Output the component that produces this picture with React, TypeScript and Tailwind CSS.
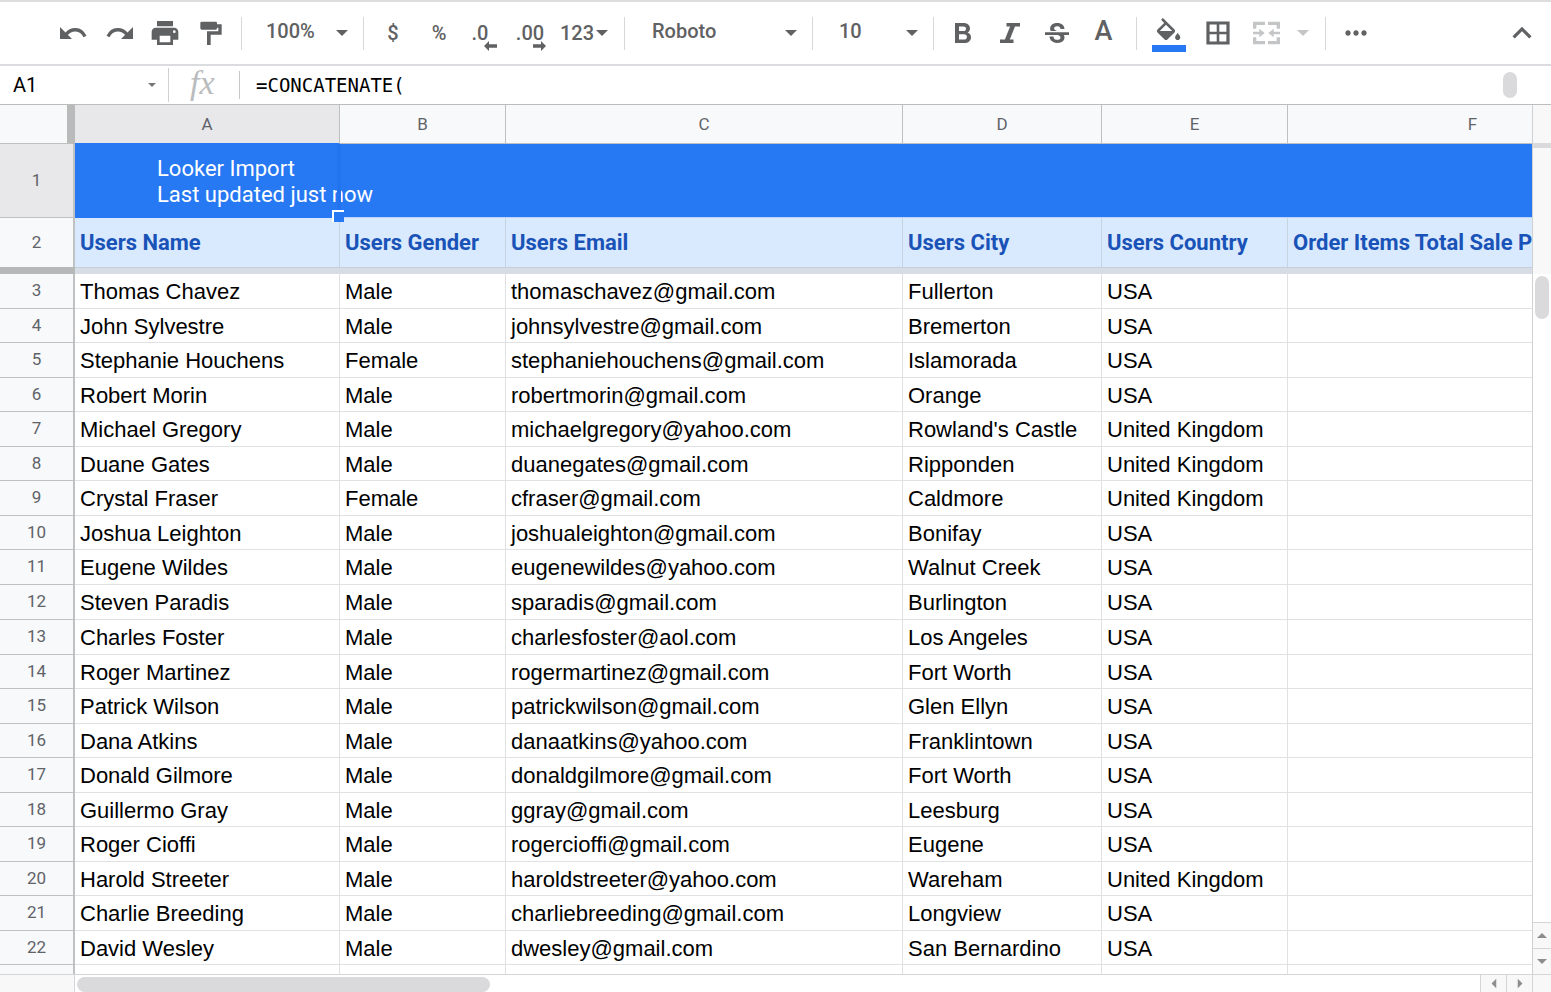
import type { ReactNode } from 'react';
import { MdExpandLess, MdMoreHoriz, MdPrint, MdStrikethroughS } from 'react-icons/md';

type User = [name: string, gender: string, email: string, city: string, country: string];

const USERS: User[] = [
  ['Thomas Chavez', 'Male', 'thomaschavez@gmail.com', 'Fullerton', 'USA'],
  ['John Sylvestre', 'Male', 'johnsylvestre@gmail.com', 'Bremerton', 'USA'],
  ['Stephanie Houchens', 'Female', 'stephaniehouchens@gmail.com', 'Islamorada', 'USA'],
  ['Robert Morin', 'Male', 'robertmorin@gmail.com', 'Orange', 'USA'],
  ['Michael Gregory', 'Male', 'michaelgregory@yahoo.com', "Rowland's Castle", 'United Kingdom'],
  ['Duane Gates', 'Male', 'duanegates@gmail.com', 'Ripponden', 'United Kingdom'],
  ['Crystal Fraser', 'Female', 'cfraser@gmail.com', 'Caldmore', 'United Kingdom'],
  ['Joshua Leighton', 'Male', 'joshualeighton@gmail.com', 'Bonifay', 'USA'],
  ['Eugene Wildes', 'Male', 'eugenewildes@yahoo.com', 'Walnut Creek', 'USA'],
  ['Steven Paradis', 'Male', 'sparadis@gmail.com', 'Burlington', 'USA'],
  ['Charles Foster', 'Male', 'charlesfoster@aol.com', 'Los Angeles', 'USA'],
  ['Roger Martinez', 'Male', 'rogermartinez@gmail.com', 'Fort Worth', 'USA'],
  ['Patrick Wilson', 'Male', 'patrickwilson@gmail.com', 'Glen Ellyn', 'USA'],
  ['Dana Atkins', 'Male', 'danaatkins@yahoo.com', 'Franklintown', 'USA'],
  ['Donald Gilmore', 'Male', 'donaldgilmore@gmail.com', 'Fort Worth', 'USA'],
  ['Guillermo Gray', 'Male', 'ggray@gmail.com', 'Leesburg', 'USA'],
  ['Roger Cioffi', 'Male', 'rogercioffi@gmail.com', 'Eugene', 'USA'],
  ['Harold Streeter', 'Male', 'haroldstreeter@yahoo.com', 'Wareham', 'United Kingdom'],
  ['Charlie Breeding', 'Male', 'charliebreeding@gmail.com', 'Longview', 'USA'],
  ['David Wesley', 'Male', 'dwesley@gmail.com', 'San Bernardino', 'USA'],
];

const HEADINGS = [
  'Users Name',
  'Users Gender',
  'Users Email',
  'Users City',
  'Users Country',
  'Order Items Total Sale P',
];

function Caret({ className = 'w-3' }: { className?: string }) {
  return (
    <svg viewBox="0 0 12 6" className={className} fill="currentColor" aria-hidden="true">
      <path d="M0 0h12L6 6z" />
    </svg>
  );
}

function UndoArrow({ className = '' }: { className?: string }) {
  return (
    <svg width="27" height="12" viewBox="0 0 27 12" className={className} aria-hidden="true">
      <path d="M0 0v12h12z" fill="currentColor" />
      <path
        d="M6 7.500C11 1.200 20.500.300 25 9.500"
        fill="none"
        stroke="currentColor"
        strokeWidth="3.4"
      />
    </svg>
  );
}

function ToolButton({
  label,
  className = 'w-[46px]',
  children,
}: {
  label: string;
  className?: string;
  children: ReactNode;
}) {
  return (
    <button
      type="button"
      aria-label={label}
      className={`flex h-10 shrink-0 items-center justify-center ${className}`}
    >
      {children}
    </button>
  );
}

function Divider() {
  return <div className="h-[33px] w-px shrink-0 bg-[#d5d7da]" />;
}

function ToolSelect({
  label,
  value,
  className,
}: {
  label: string;
  value: string;
  className: string;
}) {
  return (
    <div className={`relative flex shrink-0 items-center ${className}`}>
      <select
        aria-label={label}
        defaultValue={value}
        className="h-9 w-full appearance-none bg-transparent pb-1 text-xl leading-8 font-medium outline-none"
      >
        <option>{value}</option>
      </select>
      <Caret className="pointer-events-none absolute right-[15px] w-3" />
    </div>
  );
}

function Toolbar() {
  return (
    <div
      role="toolbar"
      className="flex h-[66px] shrink-0 items-center border-t-2 border-b-2 border-t-[#dddddd] border-b-[#dadce0] text-[#5f6163]"
    >
      <div className="flex w-[241px] shrink-0 pl-[50px]">
        <ToolButton label="Undo">
          <UndoArrow />
        </ToolButton>
        <ToolButton label="Redo">
          <UndoArrow className="-scale-x-100" />
        </ToolButton>
        <ToolButton label="Print">
          <MdPrint size={32} />
        </ToolButton>
        <ToolButton label="Paint format">
          <svg width="22" height="24" viewBox="0 0 66 72" fill="currentColor">
            <path d="M5 2h42q4 0 4 4v4h14v31H32v31H21V31h34V20h-4v2q0 4-4 4H5q-4 0-4-4V6q0-4 4-4z" />
          </svg>
        </ToolButton>
      </div>
      <Divider />
      <ToolSelect label="Zoom" value="100%" className="w-[121px] pl-6" />
      <Divider />
      <div className="flex w-[260px] shrink-0 pl-1.5 text-xl font-medium">
        <ToolButton label="Format as currency">$</ToolButton>
        <ToolButton label="Format as percent">%</ToolButton>
        <ToolButton label="Decrease decimal places" className="relative w-[46px] pr-2.5">
          .0
          <svg
            className="absolute right-[11px] bottom-0.5"
            width="13"
            height="10"
            viewBox="0 0 13 10"
            fill="currentColor"
          >
            <path d="M0 5l5-5v3.2h8v3.6H5V10z" />
          </svg>
        </ToolButton>
        <ToolButton label="Increase decimal places" className="relative w-[46px] pr-0.5">
          .00
          <svg
            className="absolute right-2 bottom-0.5"
            width="13"
            height="10"
            viewBox="0 0 13 10"
            fill="currentColor"
          >
            <path d="M13 5L8 0v3.2H0v3.6h8V10z" />
          </svg>
        </ToolButton>
        <ToolButton label="More formats" className="w-[60px] gap-0.5">
          123
          <Caret />
        </ToolButton>
      </div>
      <Divider />
      <ToolSelect label="Font" value="Roboto" className="w-[187px] pl-[27px]" />
      <Divider />
      <ToolSelect label="Font size" value="10" className="w-[120px] pl-[26px]" />
      <Divider />
      <div className="flex w-[202px] shrink-0 pl-[5px]">
        <ToolButton label="Bold" className="w-[47px]">
          <svg width="16" height="20" viewBox="0 0 16 20" fill="currentColor">
            <path
              fillRule="evenodd"
              d="M0 0h8.6C12.300 0 15 2.200 15 5.400c0 1.900-.9 3.300-2.500 4.100 2.100.7 3.500 2.400 3.500 4.700 0 3.500-2.700 5.800-6.700 5.800H0zM4 3.400v4.700h4.300c1.700 0 2.700-.9 2.700-2.400s-1-2.300-2.700-2.300zM4 11.300v5.300h4.900c1.900 0 3-1 3-2.600 0-1.700-1.100-2.700-3-2.700z"
            />
          </svg>
        </ToolButton>
        <ToolButton label="Italic" className="w-[47px]">
          <svg width="20" height="20" viewBox="0 0 20 20" fill="currentColor">
            <path d="M6.500 0H20v3.400h-5L9.800 16.600h3.700V20H0v-3.400h4.900L10.100 3.400H6.500z" />
          </svg>
        </ToolButton>
        <ToolButton label="Strikethrough" className="w-[47px] pt-1">
          <MdStrikethroughS size={32} />
        </ToolButton>
        <ToolButton label="Text color" className="w-[47px] pb-1 text-[27px] font-medium">
          A
        </ToolButton>
      </div>
      <Divider />
      <div className="flex w-[188px] shrink-0 pl-[7px]">
        <ToolButton label="Fill color" className="w-[49px] pt-1">
          <svg width="34" height="34" viewBox="0 0 34 34" fill="currentColor">
            <path
              transform="translate(1 0) scale(1.3)"
              d="M16.56 8.94L7.62 0 6.21 1.41l2.38 2.38-5.15 5.15a1.49 1.49 0 0 0 0 2.12l5.5 5.5c.29.29.68.44 1.06.44s.77-.15 1.06-.44l5.5-5.5c.59-.58.59-1.53 0-2.12zM5.21 10L10 5.21 14.79 10zM19 11.5s-2 2.17-2 3.5c0 1.1.9 2 2 2s2-.9 2-2c0-1.33-2-3.5-2-3.5z"
            />
            <path d="M0 27h34v7H0z" fill="#2678f3" />
          </svg>
        </ToolButton>
        <ToolButton label="Borders" className="w-[49px]">
          <svg width="24" height="24" viewBox="0 0 24 24" fill="none" stroke="currentColor">
            <path d="M2 2h20v20H2z" strokeWidth="3.2" />
            <path d="M12 2v20M2 12h20" strokeWidth="2.6" />
          </svg>
        </ToolButton>
        <ToolButton label="Merge cells" className="w-[49px] text-[#c3c5c7]">
          <svg width="27" height="24" viewBox="0 0 81 72" fill="currentColor">
            <path d="M0 2h36v10H10v11H0zM45 2h36v21H71V12H45zM0 49h10v11h26v10H0zM71 49h10v21H45V60h26zM0 32h19v-9l16 13-16 13v-9H0zM81 32H62v-9L46 36l16 13v-9h19z" />
          </svg>
        </ToolButton>
        <ToolButton label="Merge options" className="w-6 text-[#c3c5c7]">
          <Caret />
        </ToolButton>
      </div>
      <Divider />
      <ToolButton label="More" className="ml-1.5 w-[47px]">
        <MdMoreHoriz size={32} />
      </ToolButton>
      <ToolButton label="Hide the menus" className="mr-1.5 ml-auto w-[47px]">
        <MdExpandLess size={38} />
      </ToolButton>
    </div>
  );
}

function FormulaBar() {
  return (
    <div className="flex h-[39px] shrink-0 items-center border-b border-[#bdbdbd]">
      <div className="relative flex w-[168px] shrink-0 items-center">
        <input
          aria-label="Name box"
          defaultValue="A1"
          className="w-full bg-transparent pl-[13px] text-xl leading-6 outline-none"
        />
        <Caret className="absolute right-3 w-2 text-[#777777]" />
      </div>
      <div className="h-[34px] w-px shrink-0 bg-[#d0d0d0]" />
      <label
        htmlFor="formula"
        className="w-[70px] shrink-0 pb-1 pl-[21px] font-['Liberation_Serif',serif] text-[34px] leading-8 text-[#b9bbbd] italic"
      >
        fx
      </label>
      <div className="h-7 w-px shrink-0 bg-[#c8c8c8]" />
      <input
        id="formula"
        defaultValue="=CONCATENATE("
        className="min-w-0 flex-1 bg-transparent pl-4 font-['DejaVu_Sans_Mono',monospace] text-[19px] leading-6 outline-none"
      />
      <div className="mr-[34px] h-[26px] w-3.5 shrink-0 rounded-full bg-[#dadadc]" />
    </div>
  );
}

const rowHead =
  'border-r-2 border-b border-r-[#bfc1c3] border-b-[#c0c0c0] p-0 pb-0.5 text-center font-normal text-[17px] leading-5 text-[#5f6368]';
const bodyCell = 'border-r border-b border-[#e0e1e2] pt-0.5 pl-[5px] whitespace-nowrap';

function Sheet() {
  return (
    <div className="min-w-0 flex-1 overflow-hidden">
      <table className="w-[1658px] table-fixed border-separate border-spacing-0">
        <colgroup>
          <col className="w-[75px]" />
          <col className="w-[265px]" />
          <col className="w-[166px]" />
          <col className="w-[397px]" />
          <col className="w-[199px]" />
          <col className="w-[186px]" />
          <col className="w-[370px]" />
        </colgroup>
        <thead>
          <tr className="h-[39px] text-[17px] leading-5 text-[#5f6368]">
            <td className="border-r-8 border-b border-r-[#b9bbbb] border-b-[#c0c0c0] bg-[#f8f9fa]" />
            <th
              scope="col"
              className="border-r border-b border-r-[#c0c0c0] border-b-[#2678f3] bg-[#e8e8ea] p-0 font-normal"
            >
              A
            </th>
            {['B', 'C', 'D', 'E', 'F'].map((letter) => (
              <th
                key={letter}
                scope="col"
                className="border-r border-b border-r-[#c0c0c0] border-b-[#c0c0c0] bg-[#f8f9fa] p-0 font-normal"
              >
                {letter}
              </th>
            ))}
          </tr>
          <tr className="h-[74px]">
            <th scope="row" className={`${rowHead} bg-[#e8e8ea]`}>
              1
            </th>
            <td className="relative bg-[#2678f3] p-0 pt-0.5 pl-[82px] font-[Roboto,sans-serif] text-[22px] leading-[26px] whitespace-nowrap text-white">
              Looker Import
              <br />
              Last updated just now
              {/* selection edge and fill handle */}
              <span className="absolute top-0 -right-px bottom-0 w-1 bg-[#2274ee]" />
              <span className="absolute -right-1 -bottom-1 z-10 h-3 w-3 border-t-2 border-l-2 border-white bg-[#2678f3]" />
            </td>
            <td colSpan={5} className="border-b border-[#b9d5fd] bg-[#2678f3]" />
          </tr>
          <tr className="h-[49px]">
            <th scope="row" className={`${rowHead} border-b-0 bg-[#f8f9fa]`}>
              2
            </th>
            {HEADINGS.map((heading) => (
              <td
                key={heading}
                className="border-r border-[#c8d3e0] bg-[#d9eaff] p-0 pl-[5px] font-[Roboto,sans-serif] text-[22px] leading-7 font-bold whitespace-nowrap text-[#1a53b8]"
              >
                {heading}
              </td>
            ))}
          </tr>
          {/* frozen rows edge */}
          <tr className="h-[7px]">
            <td className="bg-[#b7b9b9] p-0" />
            <td colSpan={6} className="border-t border-[#c5cfdc] bg-[#d8dde5] p-0" />
          </tr>
        </thead>
        <tbody className="font-['Liberation_Sans',Arial,sans-serif] text-[22px] leading-6 text-black">
          {USERS.map((user, i) => (
            <tr key={user[2]} className={i % 2 === 0 || i === 9 ? 'h-[35px]' : 'h-[34px]'}>
              <th scope="row" className={`${rowHead} bg-[#f8f9fa] font-[Roboto,sans-serif]`}>
                {i + 3}
              </th>
              {user.map((value, col) => (
                <td key={col} className={bodyCell}>
                  {value}
                </td>
              ))}
              <td className={bodyCell} />
            </tr>
          ))}
          <tr className="h-[35px]">
            <th scope="row" className={`${rowHead} bg-[#f8f9fa]`} />
            {HEADINGS.map((heading) => (
              <td key={heading} className={bodyCell} />
            ))}
          </tr>
        </tbody>
      </table>
    </div>
  );
}

const arrowButton = 'flex shrink-0 items-center justify-center border-[#d4d5d8] bg-[#f8f8f8]';

function VerticalScroll() {
  return (
    <div className="flex w-[19px] shrink-0 flex-col border-l border-[#d0d0d0] text-[#8d8d8d]">
      <div className="h-[38px] bg-[#f8f8f8]" />
      <div className="h-[5px] bg-[#dadadc]" />
      <div className="h-[126px] bg-[#f8f8f8]" />
      <div className="mt-0.5 ml-0.5 h-[43px] w-3.5 rounded-full bg-[#dadadc]" />
      <button
        type="button"
        aria-label="Scroll up"
        className={`${arrowButton} mt-auto h-[26px] border-t`}
      >
        <Caret className="w-2.5 rotate-180" />
      </button>
      <button type="button" aria-label="Scroll down" className={`${arrowButton} h-[26px] border-t`}>
        <Caret className="w-2.5" />
      </button>
    </div>
  );
}

function HorizontalScroll() {
  return (
    <div className="flex h-[18px] shrink-0 border-t border-[#d4d5d8] text-[#8d8d8d]">
      <div className="w-[75px] border-r border-[#d4d5d8] bg-[#f8f8f8]" />
      <div className="flex-1 pt-0.5 pl-0.5">
        <div className="h-[15px] w-[413px] rounded-full bg-[#dadadc]" />
      </div>
      <button type="button" aria-label="Scroll left" className={`${arrowButton} w-[26px] border-l`}>
        <Caret className="w-2.5 rotate-90" />
      </button>
      <button type="button" aria-label="Scroll right" className={`${arrowButton} w-[26px] border-l`}>
        <Caret className="w-2.5 -rotate-90" />
      </button>
      <div className="w-[19px] border-l border-[#d4d5d8] bg-[#f8f8f8]" />
    </div>
  );
}

export default function App() {
  return (
    <div className="flex h-screen flex-col overflow-hidden bg-white font-[Roboto,sans-serif] text-black">
      <Toolbar />
      <FormulaBar />
      <div className="flex min-h-0 flex-1">
        <Sheet />
        <VerticalScroll />
      </div>
      <HorizontalScroll />
    </div>
  );
}
